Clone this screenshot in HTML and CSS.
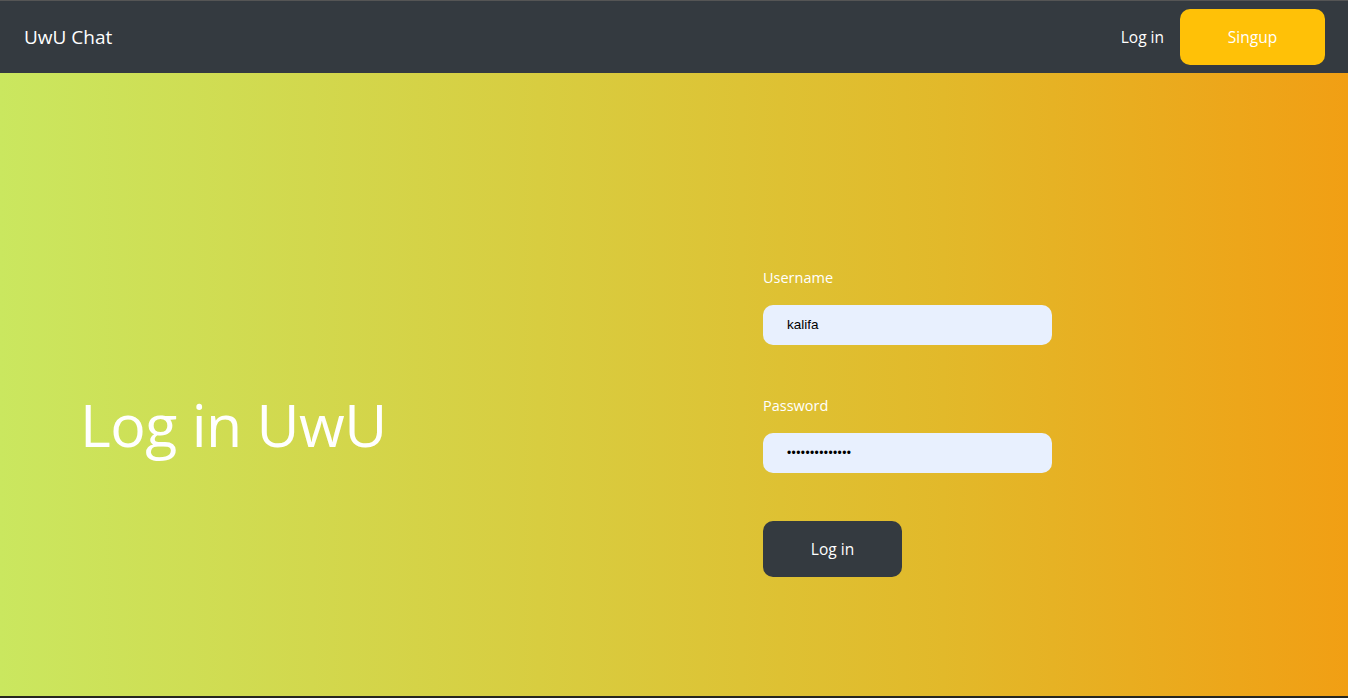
FILE: index.html
```html
<!DOCTYPE html>
<html>
<head>
<meta charset="utf-8">
<link rel="stylesheet" href="styles.css">
</head>
<body>
<nav class="navbar">
  <span class="brand">UwU Chat</span>
  <div class="nav-right">
    <a class="nav-link">Log in</a>
    <a class="btn-signup">Singup</a>
  </div>
</nav>
<main class="hero">
  <div class="hero-left">
    <h1 class="title">Log in UwU</h1>
  </div>
  <div class="hero-right">
    <form class="login-form">
      <label class="field-label">Username</label>
      <div class="input">kalifa</div>
      <label class="field-label second">Password</label>
      <div class="input password">••••••••••••••</div>
      <button type="button" class="btn-login">Log in</button>
    </form>
  </div>
</main>
</body>
</html>
```
FILE: styles.css
```css
* { box-sizing: border-box; }
html, body { margin: 0; padding: 0; }
body {
  background: #26261f;
  font-family: "Open Sans", "Noto Sans", sans-serif;
  height: 698px;
  overflow: hidden;
}
.navbar {
  height: 73px;
  background: #343a40;
  border-top: 1px solid #555;
  display: flex;
  align-items: center;
  justify-content: space-between;
  padding: 0 23px 0 24px;
}
.brand {
  color: #fff;
  font-size: 19px;
}
.nav-right {
  display: flex;
  align-items: center;
  gap: 16px;
}
.nav-link {
  color: #fff;
  font-size: 15.5px;
}
.btn-signup {
  width: 145px;
  height: 56px;
  background: #ffc107;
  border-radius: 10px;
  color: #fff;
  font-size: 15.5px;
  display: flex;
  align-items: center;
  justify-content: center;
}
.hero {
  height: 623px;
  background: linear-gradient(90deg, #cae75f 0%, #d8cd40 40%, #e2b92a 70%, #f19f14 100%);
  display: grid;
  grid-template-columns: 763px 1fr;
  align-items: center;
  padding-top: 75px;
}
.hero-left { padding-left: 80px; padding-top: 3px; }
.title {
  margin: 0;
  color: #fff;
  font-weight: 400;
  font-size: 59px;
  letter-spacing: -0.5px;
}
.login-form {
  display: flex;
  flex-direction: column;
  width: 289px;
}
.field-label {
  color: #fff;
  font-size: 14.5px;
  line-height: 20px;
  margin-bottom: 17px;
}
.field-label.second { margin-top: 51px; }
.input {
  height: 40px;
  background: #e8f0fe;
  border-radius: 10px;
  padding-left: 24px;
  display: flex;
  align-items: center;
  font-family: "Liberation Sans", Arial, sans-serif;
  font-size: 13.5px;
  color: #000;
}
.input.password { font-size: 12px; letter-spacing: 0.4px; }
.btn-login {
  margin-top: 48px;
  width: 139px;
  height: 56px;
  background: #343a40;
  border: none;
  border-radius: 10px;
  color: #fff;
  font-family: "Open Sans", "Noto Sans", sans-serif;
  font-size: 15.5px;
}
```
